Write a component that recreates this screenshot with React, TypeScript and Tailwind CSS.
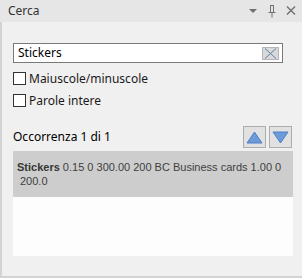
import React from 'react'

const UI = "font-['Noto_Sans',sans-serif]"

function Checkbox({ label }: { label: string }) {
  return (
    <label className="flex items-center gap-[3px] h-[13px]">
      <span className="w-[13px] h-[13px] border border-[#333333] bg-white shrink-0" />
      <span className="text-[12px] leading-[13px] text-[#1a1a1a]">{label}</span>
    </label>
  )
}

function ArrowButton({ dir }: { dir: 'up' | 'down' }) {
  return (
    <button className="w-[23px] h-[22px] border border-[#adadad] bg-[#e1e1e1] flex items-center justify-center">
      <svg width="17" height="13" viewBox="0 0 17 13">
        {dir === 'up'
          ? <polygon points="8.5,1 16,12 1,12" fill="#6d9bd8" stroke="#4f7fc4" strokeWidth="1" />
          : <polygon points="1,1 16,1 8.5,12" fill="#6d9bd8" stroke="#4f7fc4" strokeWidth="1" />}
      </svg>
    </button>
  )
}

export default function App() {
  return (
    <div className={`w-[302px] h-[278px] bg-[#f0f0f0] flex flex-col ${UI}`}>
      <div className="h-[22px] bg-[#e6e6e6] flex items-center justify-between pl-[8px] pr-[6px] shrink-0">
        <span className="text-[12px] text-[#333333]">Cerca</span>
        <div className="flex items-center gap-[10px]">
          <svg width="10" height="16" viewBox="0 0 10 16">
            <polygon points="1,6 9,6 5,10" fill="#707070" />
          </svg>
          <svg width="8" height="16" viewBox="0 0 8 16">
            <path d="M2 2.5 H6 M2.5 2.5 V9 M5.5 2.5 V9 M0.5 9.5 H7.5 M4 10 V14.5" stroke="#707070" strokeWidth="1" fill="none" />
          </svg>
          <svg width="10" height="16" viewBox="0 0 10 16">
            <path d="M1 3.5 L9 11.5 M9 3.5 L1 11.5" stroke="#707070" strokeWidth="1.4" fill="none" />
          </svg>
        </div>
      </div>

      <div className="flex-1 flex flex-col border-l-[2px] border-b-[2px] border-[#d3d3d3] pl-[11px] pt-[21px]">
        <div className="w-[270px] h-[20px] border border-[#7a7a7a] bg-white flex items-center justify-between pl-[4px] pr-[3px]">
          <span className="text-[12px] text-black leading-none">Stickers</span>
          <button className="w-[17px] h-[13px] bg-[#d9d9d9] border border-[#b5b5b5] flex items-center justify-center">
            <svg width="15" height="11" viewBox="0 0 15 11">
              <path d="M2 0.5 L13 10.5 M13 0.5 L2 10.5" stroke="#5c7fa8" strokeWidth="1" fill="none" />
            </svg>
          </button>
        </div>

        <div className="mt-[9px]"><Checkbox label="Maiuscole/minuscole" /></div>
        <div className="mt-[9px]"><Checkbox label="Parole intere" /></div>

        <div className="mt-[19px] w-[280px] h-[22px] flex items-center justify-between pr-[1px]">
          <span className="text-[12px] text-black">Occorrenza 1 di 1</span>
          <div className="flex gap-[3px]">
            <ArrowButton dir="up" />
            <ArrowButton dir="down" />
          </div>
        </div>

        <div className="mt-[3px] w-[280px] h-[105px] bg-[#fdfdfd] flex flex-col">
          <div className="h-[46px] bg-[#cdcdcd] pl-[4px] pt-[9px] font-['Liberation_Sans',Arial,sans-serif] text-[11px] leading-[14px] text-[#404040]">
            <div className="whitespace-nowrap">
              <span className="font-bold text-[#363636]">Stickers</span> 0.15 0 300.00 200 BC Business cards 1.00 0
            </div>
            <div className="pl-[3px]">200.0</div>
          </div>
        </div>
      </div>
    </div>
  )
}
